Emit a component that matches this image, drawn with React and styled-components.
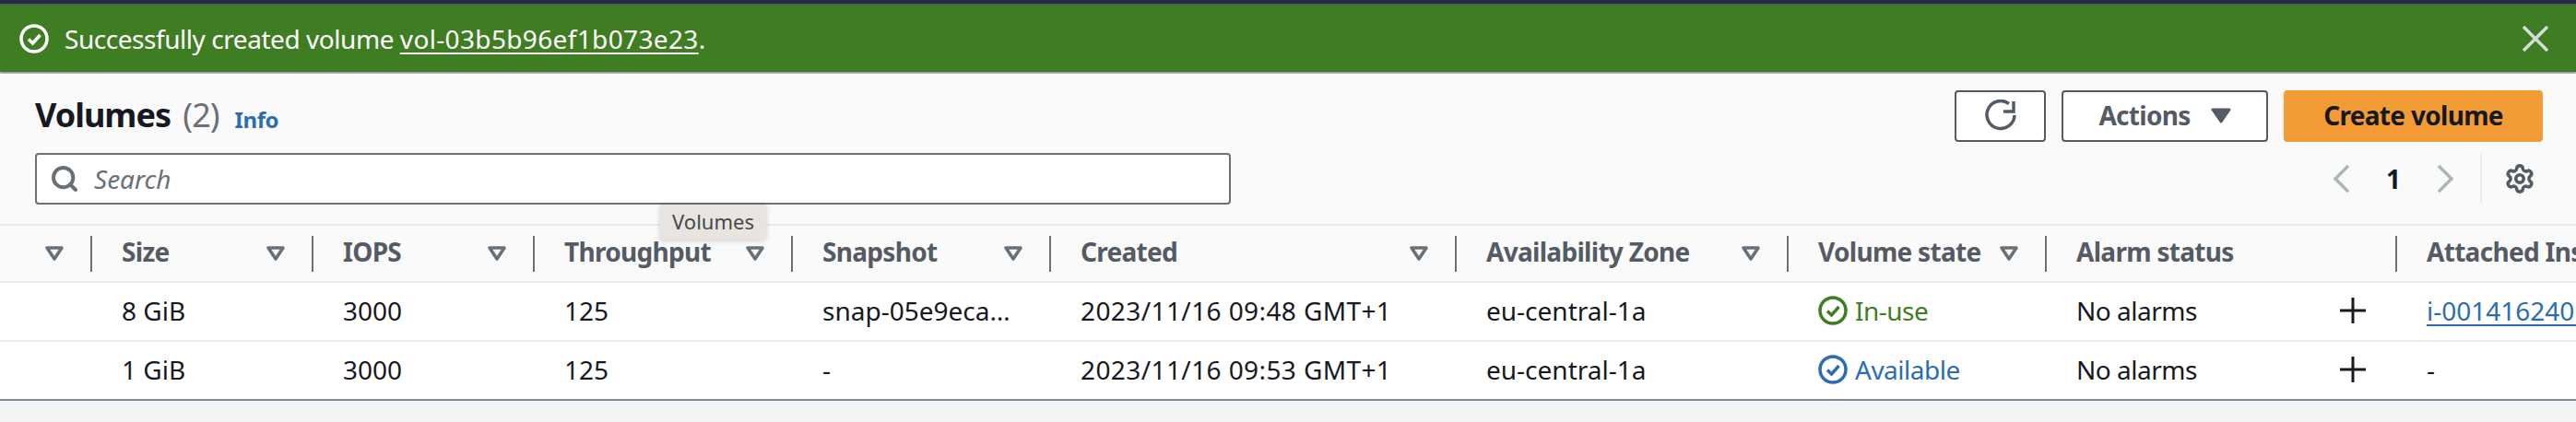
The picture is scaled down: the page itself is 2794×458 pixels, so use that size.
import React from "react";
import styled, { createGlobalStyle } from "styled-components";
import { Search, Settings } from "lucide-react";

const GlobalStyle = createGlobalStyle`
  html, body {
    margin: 0;
    padding: 0;
    background: #f2f3f3;
    font-family: "Noto Sans", "Open Sans", sans-serif;
    color: #16191f;
  }
`;

const GRID = "100px 240px 240px 280px 280px 440px 360px 280px 380px 1fr";

const PAGE = styled.div`
  position: relative;
  width: 2794px;
  height: 458px;
  overflow: hidden;
`;
const TOPBAR = styled.div`
  height: 4px;
  background: #232f3e;
  border-bottom: 2px solid #545b64;
`;
const FLASH = styled.div`
  height: 72px;
  background: #3f7d23;
  color: #fff;
  display: flex;
  align-items: center;
  padding: 0 30px 0 21px;
  font-size: 28px;
  gap: 17px;
  box-shadow: 0 2px 2px rgba(60, 70, 80, 0.55);
`;
const FLASHTEXT = styled.div`
  flex: 1;
  letter-spacing: -0.45px;
  & a {
    color: #fff;
    letter-spacing: 0.35px;
    text-decoration: underline;
    text-underline-offset: 4px;
    text-decoration-thickness: 2px;
  }
`;
const PANEL = styled.div`
  margin-top: 2px;
  height: 145px;
  background: #fafafa;
  padding: 18px 36px 0 38px;
  display: flex;
  justify-content: space-between;
`;
const LEFT = styled.div`
  display: flex;
  flex-direction: column;
  gap: 12px;
`;
const TITLEROW = styled.div`
  height: 56px;
  display: flex;
  align-items: center;
  gap: 17px;
`;
const TITLE = styled.h1`
  margin: 0 0 3px;
  font-size: 36px;
  font-weight: 700;
  letter-spacing: -1px;
  & span {
    color: #687078;
    font-weight: 400;
    margin-left: 5px;
  }
`;
const INFO = styled.a`
  font-size: 24px;
  font-weight: 700;
  letter-spacing: -0.4px;
  color: #2a6db5;
  margin-top: 6px;
`;
const SEARCH = styled.div`
  box-sizing: border-box;
  width: 1297px;
  height: 56px;
  background: #fff;
  border: 2px solid #687078;
  border-radius: 4px;
  display: flex;
  align-items: center;
  gap: 16px;
  padding-left: 14px;
  color: #687078;
  font-size: 28px;
  font-style: italic;
`;
const RIGHT = styled.div`
  display: flex;
  flex-direction: column;
  align-items: flex-end;
  gap: 12px;
`;
const BUTTONS = styled.div`
  display: flex;
  gap: 17px;
`;
const BUTTON = styled.button`
  box-sizing: border-box;
  height: 56px;
  width: ${props => props.width}px;
  border-radius: 4px;
  border: 2px solid ${props => (props.primary ? "#f39c36" : "#545b64")};
  background: ${props => (props.primary ? "#f39c36" : "#fff")};
  color: ${props => (props.primary ? "#16191f" : "#545b64")};
  font-family: inherit;
  font-size: 28px;
  font-weight: 700;
  letter-spacing: -0.7px;
  display: flex;
  align-items: center;
  justify-content: center;
  gap: 22px;
  padding: 0 0 2px;
`;
const PAGER = styled.div`
  height: 56px;
  display: flex;
  align-items: center;
  padding-right: 8px;
`;
const PAGENUM = styled.span`
  width: 94px;
  text-align: center;
  font-size: 28px;
  font-weight: 700;
`;
const PAGEDIVIDER = styled.div`
  width: 2px;
  height: 56px;
  background: #eaeded;
  margin: 0 24px 0 29px;
`;
const TABLE = styled.div`
  background: #fff;
  border-top: 2px solid #eaeded;
  border-bottom: 2px solid #7d8998;
`;
const HEADROW = styled.div`
  display: grid;
  grid-template-columns: ${GRID};
  height: 60px;
  align-items: center;
  background: #fafafa;
  border-bottom: 2px solid #eaeded;
`;
const HEADCELL = styled.div`
  box-sizing: border-box;
  height: 39px;
  display: flex;
  align-items: center;
  justify-content: space-between;
  padding: 0 29px 0 32px;
  font-size: 28px;
  font-weight: 700;
  letter-spacing: -0.7px;
  color: #545b64;
  white-space: nowrap;
  border-right: ${props => (props.last ? "none" : "2px solid #687078")};
  & span {
    margin-bottom: 4px;
  }
`;
const ROW = styled.div`
  display: grid;
  grid-template-columns: ${GRID};
  height: 62px;
  align-items: center;
  font-size: 28px;
  white-space: nowrap;
  & + & {
    border-top: 2px solid #eaeded;
  }
`;
const CELL = styled.div`
  padding: 0 ${props => (props.alarm ? "34px" : "0")} 2px 32px;
  display: flex;
  align-items: center;
  justify-content: space-between;
  letter-spacing: ${props => props.spacing || "0"};
`;
const STATUS = styled.span`
  display: flex;
  align-items: center;
  gap: 8px;
  letter-spacing: -0.5px;
  color: ${props => props.color};
`;
const LINK = styled.a`
  color: #2a6db5;
  text-decoration: underline;
  text-underline-offset: 4px;
  text-decoration-thickness: 2px;
`;
const TOOLTIP = styled.div`
  position: absolute;
  left: 716px;
  top: 222px;
  width: 115px;
  height: 38px;
  display: flex;
  align-items: center;
  justify-content: center;
  background: #e8e4df;
  border-radius: 2px;
  font-size: 22px;
  padding-bottom: 2px;
  box-sizing: border-box;
  color: #45484c;
  box-shadow: 0 1px 6px rgba(0, 0, 0, 0.18);
`;

const CheckCircle = ({ color, size = 32 }) => (
  <svg width={size} height={size} viewBox="0 0 32 32" fill="none" style={{ flex: "none" }}>
    <circle cx="16" cy="16" r="14" stroke={color} strokeWidth="3.5" />
    <path d="M10 16.5l4.5 4.5 8-9" stroke={color} strokeWidth="3.5" />
  </svg>
);

const CloseIcon = () => (
  <svg width="28" height="28" viewBox="0 0 28 28" fill="none">
    <path d="M1 1l26 26M27 1L1 27" stroke="#d5dbdb" strokeWidth="3.5" />
  </svg>
);

const RefreshIcon = () => (
  <svg width="34" height="34" viewBox="0 0 34 34" fill="none" stroke="#545b64" strokeWidth="3.5">
    <path d="M26 4.5A15 15 0 1 0 32 17" />
    <path d="M31 2v11H20" fill="none" />
  </svg>
);

const Caret = () => (
  <svg width="22" height="17" viewBox="0 0 22 17">
    <path d="M2 2h18l-9 13z" fill="#545b64" stroke="#545b64" strokeWidth="3" strokeLinejoin="round" />
  </svg>
);

const Chevron = ({ flip }) => (
  <svg width="18" height="32" viewBox="0 0 18 32" fill="none">
    <path d={flip ? "M2 2l14 14L2 30" : "M16 2L2 16l14 14"} stroke="#aab7b8" strokeWidth="3.5" />
  </svg>
);

const FilterIcon = () => (
  <svg width="20" height="16" viewBox="0 0 20 16" fill="none" style={{ flex: "none" }}>
    <path d="M2 2h16l-8 12z" stroke="#687078" strokeWidth="3.5" strokeLinejoin="round" />
  </svg>
);

const PlusIcon = () => (
  <svg width="28" height="28" viewBox="0 0 28 28" fill="none">
    <path d="M14 0v28M0 14h28" stroke="#16191f" strokeWidth="3" />
  </svg>
);

const columns = [
  { name: "", filter: true },
  { name: "Size", filter: true },
  { name: "IOPS", filter: true },
  { name: "Throughput", filter: true },
  { name: "Snapshot", filter: true },
  { name: "Created", filter: true },
  { name: "Availability Zone", filter: true },
  { name: "Volume state", filter: true },
  { name: "Alarm status", filter: false },
  { name: "Attached Instances", filter: false, last: true }
];

const volumes = [
  {
    size: "8 GiB",
    snapshot: "snap-05e9eca…",
    created: "2023/11/16 09:48 GMT+1",
    state: "In-use",
    stateColor: "#3f7d23",
    attached: <LINK>i-0014162409a7</LINK>
  },
  {
    size: "1 GiB",
    snapshot: "-",
    created: "2023/11/16 09:53 GMT+1",
    state: "Available",
    stateColor: "#2a6db5",
    attached: "-"
  }
];

const App = () => {
  return (
    <PAGE>
      <GlobalStyle />
      <TOPBAR />
      <FLASH>
        <CheckCircle color="#fff" />
        <FLASHTEXT>
          Successfully created volume <a>vol-03b5b96ef1b073e23</a>.
        </FLASHTEXT>
        <CloseIcon />
      </FLASH>
      <PANEL>
        <LEFT>
          <TITLEROW>
            <TITLE>
              Volumes <span>(2)</span>
            </TITLE>
            <INFO>Info</INFO>
          </TITLEROW>
          <SEARCH>
            <Search size={32} strokeWidth={3} />
            Search
          </SEARCH>
        </LEFT>
        <RIGHT>
          <BUTTONS>
            <BUTTON width={99}>
              <RefreshIcon />
            </BUTTON>
            <BUTTON width={224}>
              Actions
              <Caret />
            </BUTTON>
            <BUTTON width={281} primary>
              Create volume
            </BUTTON>
          </BUTTONS>
          <PAGER>
            <Chevron />
            <PAGENUM>1</PAGENUM>
            <Chevron flip />
            <PAGEDIVIDER />
            <Settings size={34} strokeWidth={2.5} color="#545b64" />
          </PAGER>
        </RIGHT>
      </PANEL>
      <TABLE>
        <HEADROW>
          {columns.map((col, index) => (
            <HEADCELL key={index} last={col.last}>
              <span>{col.name}</span>
              {col.filter && <FilterIcon />}
            </HEADCELL>
          ))}
        </HEADROW>
        {volumes.map(item => (
          <ROW key={item.created}>
            <CELL />
            <CELL>{item.size}</CELL>
            <CELL>3000</CELL>
            <CELL>125</CELL>
            <CELL>{item.snapshot}</CELL>
            <CELL spacing="0.4px">{item.created}</CELL>
            <CELL>eu-central-1a</CELL>
            <CELL>
              <STATUS color={item.stateColor}>
                <CheckCircle color={item.stateColor} />
                {item.state}
              </STATUS>
            </CELL>
            <CELL alarm spacing="-0.5px">
              No alarms
              <PlusIcon />
            </CELL>
            <CELL>{item.attached}</CELL>
          </ROW>
        ))}
      </TABLE>
      <TOOLTIP>Volumes</TOOLTIP>
    </PAGE>
  );
};

export default App;
